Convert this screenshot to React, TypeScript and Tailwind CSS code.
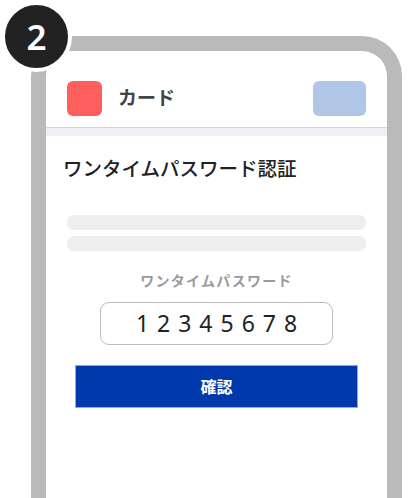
import React from 'react';

const jp = "font-['Noto_Sans','Noto_Sans_CJK_JP',sans-serif]";

export default function App() {
  return (
    <div className={`relative w-[408px] h-[498px] overflow-hidden bg-white ${jp}`}>
      {/* phone frame */}
      <div className="ml-[31px] mt-[36px] w-[371px] h-[480px] border-[15px] border-b-0 border-[#bababa] rounded-t-[40px] bg-white flex flex-col">
        <div className="flex items-center justify-between px-[21px] pt-[30px] pb-[11px]">
          <div className="flex items-center gap-[16px]">
            <div className="w-[35px] h-[35px] rounded-[6px] bg-[#ff5e5e]" />
            <span className="text-[19px] font-bold text-[#444] leading-none">カード</span>
          </div>
          <div className="w-[53px] h-[35px] rounded-[6px] bg-[#b1c5e6]" />
        </div>
        <div className="border-t border-[#d6d6dc] h-[9px] bg-[#efeff4]" />

        <div className="flex flex-col px-[21px]">
          <h1 className="mt-[20px] -ml-[4px] text-[19.5px] leading-[26px] font-medium text-[#222]">ワンタイムパスワード認証</h1>

          <div className="mt-[33px] flex flex-col gap-[6px]">
            <div className="h-[15px] rounded-[7px] bg-[#eeeeee]" />
            <div className="h-[15px] rounded-[7px] bg-[#eeeeee]" />
          </div>

          <div className="mt-[20px] text-center text-[14px] leading-[20px] font-bold tracking-[1.3px] text-[#9a9a9a]">ワンタイムパスワード</div>

          <div className="mt-[11px] mx-auto w-[233px] h-[43px] rounded-[9px] border border-[#bdbdbd] flex items-center justify-center">
            <span className="text-[23px] leading-none font-normal text-[#222] tracking-[8px] pl-[8px]">12345678</span>
          </div>

          <button className="mt-[20px] mx-[8px] h-[43px] bg-[#0039ab] border border-[#8fa9dd] text-white text-[16px] font-bold flex items-center justify-center">
            確認
          </button>
        </div>
      </div>

      {/* step badge */}
      <div className="absolute left-[1px] top-[1px] w-[71px] h-[71px] rounded-full border-[4px] border-white bg-[#222] flex items-center justify-center">
        <span className="text-white text-[35px] font-semibold leading-none">2</span>
      </div>
    </div>
  );
}
